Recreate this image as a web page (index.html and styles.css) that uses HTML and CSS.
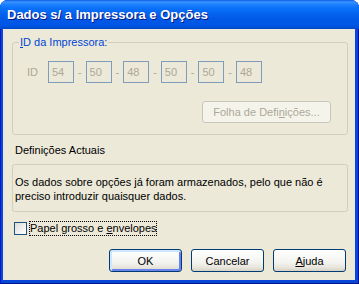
FILE: index.html
```html
<!DOCTYPE html>
<html lang="pt">

<head>
    <meta charset="UTF-8">
    <meta name="viewport" content="width=device-width, initial-scale=1.0">
    <title>Dados s/ a Impressora e Opções</title>
    <link rel="stylesheet" href="styles.css">
</head>

<body>
    <div class="window">
        <div class="titlebar">Dados s/ a Impressora e Opções</div>
        <div class="content">
            <div class="group">
                <div class="group-title"><u>I</u>D da Impressora:</div>
                <div class="id-row">
                    <span class="id-label">ID</span>
                    <span class="id-box">54</span>
                    <span class="id-sep">-</span>
                    <span class="id-box">50</span>
                    <span class="id-sep">-</span>
                    <span class="id-box">48</span>
                    <span class="id-sep">-</span>
                    <span class="id-box">50</span>
                    <span class="id-sep">-</span>
                    <span class="id-box">50</span>
                    <span class="id-sep">-</span>
                    <span class="id-box">48</span>
                </div>
                <div class="sheet-row">
                    <button class="btn btn-disabled" disabled>Folha de Defi<u>n</u>ições...</button>
                </div>
            </div>

            <div class="section-label">Definições Actuais</div>
            <div class="info-box">
                Os dados sobre opções já foram armazenados, pelo que não é
                preciso introduzir quaisquer dados.
            </div>

            <div class="check-row">
                <span class="checkbox"></span>
                <span class="check-label">Papel grosso e <u>e</u>nvelopes</span>
            </div>

            <div class="button-row">
                <button class="btn btn-default">OK</button>
                <button class="btn">Cancelar</button>
                <button class="btn"><u>A</u>juda</button>
            </div>
        </div>
    </div>
</body>

</html>
```

FILE: styles.css
```css
body {
    margin: 0;
    background-color: #ffffff;
    font-family: "Liberation Sans", Arial, sans-serif;
    font-size: 11px;
    color: #000000;
}

.window {
    width: 359px;
    height: 284px;
    box-sizing: border-box;
    display: flex;
    flex-direction: column;
    padding: 0 4px 4px 3px;
    background-color: #0846d8;
    border-radius: 8px 8px 0 0;
    box-shadow: inset 1px 0 0 #0019cf, inset -1px -1px 0 #00138c;
}

.titlebar {
    height: 29px;
    margin: 0 -4px 0 -3px;
    padding-left: 7px;
    line-height: 30px;
    border-radius: 8px 8px 0 0;
    background: linear-gradient(#0a5ee8 0px, #3d95ff 2px, #1f84ff 4px, #0a72fa 8px, #0462ee 14px, #0058e6 20px, #0056e6 25px, #0050d8 27px, #0046c8 29px);
    color: #ffffff;
    font-weight: bold;
    font-size: 13px;
    text-shadow: 1px 1px 0 #0a1883;
}

.content {
    flex: 1;
    display: flex;
    flex-direction: column;
    padding: 0 7px 0 9px;
    background-color: #ece9d8;
}

.group {
    margin-top: 13px;
    padding: 0 16px 11px 14px;
    border: 1px solid #d0d0bf;
    border-radius: 3px;
}

.group-title {
    display: table;
    margin: -7px 0 0 -8px;
    padding: 0 1px;
    line-height: 13px;
    background-color: #ece9d8;
    color: #0046d5;
}

.id-row {
    display: flex;
    align-items: center;
    margin-top: 12px;
    color: #aca899;
}

.id-label {
    width: 21px;
}

.id-box {
    width: 26px;
    height: 22px;
    box-sizing: border-box;
    padding-left: 3px;
    line-height: 20px;
    border: 1px solid #7f9db9;
}

.id-sep {
    width: 11.6px;
    text-align: center;
}

.sheet-row {
    display: flex;
    justify-content: flex-end;
    margin-top: 18px;
}

.btn {
    height: 23px;
    width: 73px;
    padding: 0;
    font-family: "Liberation Sans", Arial, sans-serif;
    font-size: 11px;
    color: #000000;
    border: 1px solid #003c74;
    border-radius: 3px;
    background: linear-gradient(#ffffff, #f3f3ef 60%, #e6e4da 85%, #d6d0c5);
}

.btn-default {
    box-shadow: inset 1px 1px 0 1px #cee7ff, inset -1px -1px 0 1px #6982ee;
}

.btn-disabled {
    width: 129px;
    height: 22px;
    color: #aca899;
    border-color: #c9c7ba;
    background: #f5f4ea;
}

.section-label {
    margin-top: 9px;
    padding-left: 3px;
    line-height: 13px;
}

.info-box {
    height: 48px;
    box-sizing: border-box;
    margin-top: 7px;
    padding: 10px 4px 0 2px;
    line-height: 14px;
    border: 1px solid #d0d0bf;
    border-radius: 3px;
}

.check-row {
    display: flex;
    align-items: center;
    margin-top: 8px;
    height: 16px;
    padding-left: 2px;
}

.checkbox {
    width: 13px;
    height: 13px;
    box-sizing: border-box;
    border: 1px solid #1c5180;
    background: linear-gradient(135deg, #dcdcd7, #ffffff);
}

.check-label {
    margin-left: 2px;
    padding: 1px 0 1px 1px;
    line-height: 13px;
    outline: 1px dotted #000000;
    outline-offset: -1px;
}

.button-row {
    display: flex;
    justify-content: flex-end;
    gap: 9px;
    margin-top: 13px;
    padding-right: 2px;
}
```
